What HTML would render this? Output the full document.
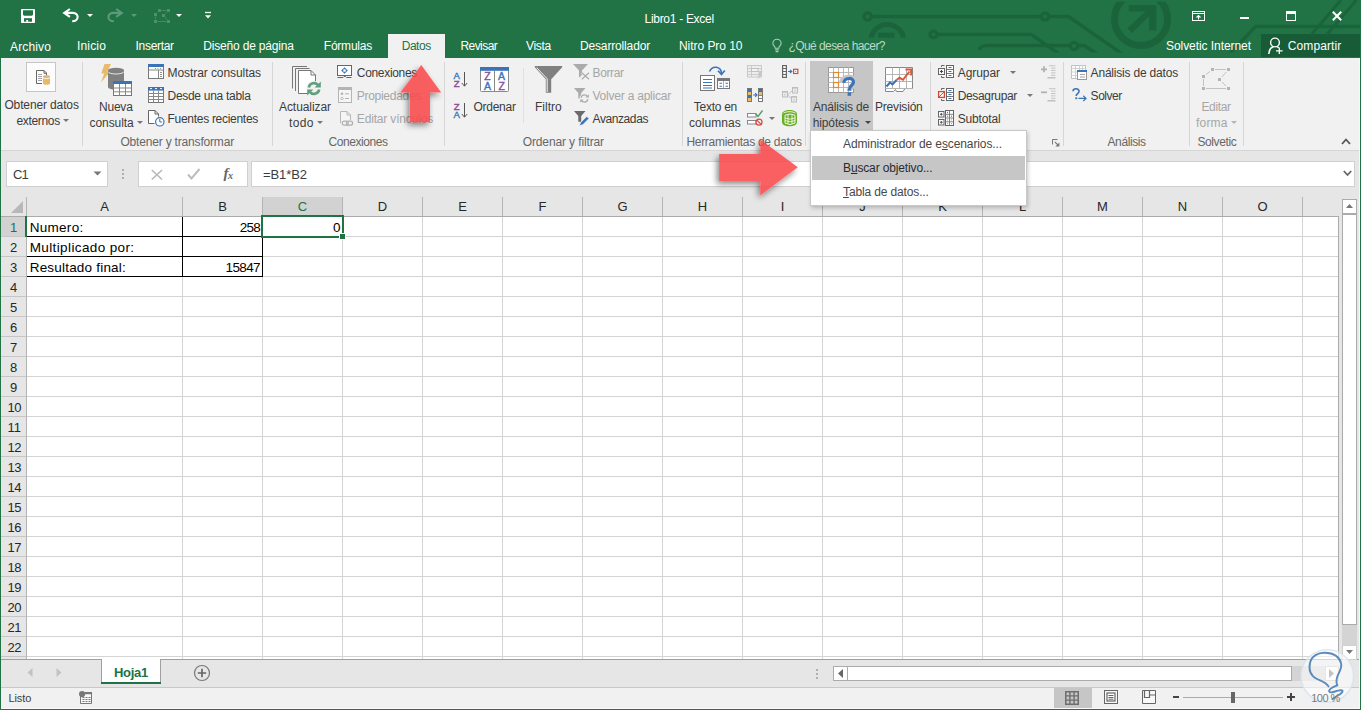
<!DOCTYPE html>
<html lang="es"><head><meta charset="utf-8"><title>Libro1 - Excel</title>
<style>
html,body{margin:0;padding:0;}
body{width:1361px;height:710px;overflow:hidden;background:#fff;font-family:"Liberation Sans",sans-serif;}
#app{position:relative;width:1361px;height:710px;overflow:hidden;background:#e6e6e6;}
.t{position:absolute;line-height:1;white-space:pre;z-index:5;}
.t u{text-decoration:underline;}
.a{position:absolute;}
svg{position:absolute;overflow:visible;}
.sep{position:absolute;width:1px;background:#d6d6d6;top:62px;height:84px;}
.dd{position:absolute;width:0;height:0;border-left:3px solid transparent;border-right:3px solid transparent;border-top:3px solid #777;}

</style></head>
<body>
<div id="app">
<!-- title + tabs -->
<div class="a" style="left:0;top:0;width:1361px;height:58px;background:#217346;"></div>
<div class="a" style="left:388px;top:34px;width:57px;height:24px;background:#f1f1f1;"></div>
<div class="a" style="left:1261px;top:34px;width:100px;height:23px;background:#185c37;"></div>
<!-- ribbon -->
<div class="a" style="left:0;top:58px;width:1361px;height:92px;background:#f1f1f1;"></div>
<div class="a" style="left:0;top:150px;width:1361px;height:1px;background:#d5d5d5;"></div>
<!-- formula bar -->
<div class="a" style="left:6px;top:161px;width:100px;height:24px;background:#fff;border:1px solid #d0d0d0;"></div>
<div class="a" style="left:138px;top:161px;width:108px;height:24px;background:#fff;border:1px solid #d0d0d0;"></div>
<div class="a" style="left:251px;top:161px;width:1102px;height:24px;background:#fff;border:1px solid #d0d0d0;"></div>
<!-- grid -->
<div class="a" style="left:27px;top:217px;width:1311px;height:442px;background-color:#fff;background-image:linear-gradient(to bottom,transparent 19px,#d4d4d4 19px),linear-gradient(to right,transparent 75px,#d4d4d4 75px,#d4d4d4 76px,transparent 76px);background-size:100% 20px,80px 100%;"></div>
<div class="a" style="left:27px;top:217px;width:155px;height:442px;background-color:#fff;background-image:linear-gradient(to bottom,transparent 19px,#d4d4d4 19px);background-size:100% 20px;border-right:1px solid #d4d4d4;"></div>
<!-- grid outer borders -->
<div class="a" style="left:1338px;top:217px;width:1px;height:442px;background:#ababab;"></div>
<div class="a" style="left:1px;top:659px;width:1358px;height:1px;background:#a0a0a0;"></div>
<!-- column header separators -->
<div class="a" style="left:26px;top:197px;width:1312px;height:19px;background-image:linear-gradient(to right,transparent 75px,#b4b4b4 75px,#b4b4b4 76px,transparent 76px);background-size:80px 100%;background-position:1px 0;"></div>
<div class="a" style="left:27px;top:197px;width:155px;height:19px;background:#e6e6e6;"></div>
<div class="a" style="left:26px;top:197px;width:1px;height:462px;background:#b4b4b4;"></div>
<div class="a" style="left:263px;top:197px;width:79px;height:19px;background:#d2d2d2;"></div>
<div class="a" style="left:1px;top:216px;width:1338px;height:1px;background:#ababab;"></div>
<div class="a" style="left:263px;top:215px;width:79px;height:2px;background:#217346;"></div>
<!-- row header lines -->
<div class="a" style="left:1px;top:217px;width:25px;height:442px;background-image:linear-gradient(to bottom,transparent 19px,#c6c6c6 19px);background-size:100% 20px;"></div>
<div class="a" style="left:1px;top:217px;width:25px;height:19px;background:#d2d2d2;"></div>
<div class="a" style="left:25px;top:216px;width:2px;height:21px;background:#217346;"></div>
<svg style="left:11px;top:201px" width="13" height="13" viewBox="0 0 13 13"><path d="M12 0 V12 H0 Z" fill="#b8b8b8"/></svg>
<!-- cell borders A1:B3 -->
<div class="a" style="left:27px;top:236px;width:236px;height:1px;background:#000;"></div>
<div class="a" style="left:27px;top:256px;width:236px;height:1px;background:#000;"></div>
<div class="a" style="left:27px;top:276px;width:236px;height:1px;background:#000;"></div>
<div class="a" style="left:182px;top:217px;width:1px;height:60px;background:#000;"></div>
<div class="a" style="left:262px;top:217px;width:1px;height:60px;background:#000;"></div>
<!-- selection C1 -->
<div class="a" style="left:261px;top:215px;width:79px;height:19px;border:2px solid #217346;"></div>
<div class="a" style="left:339px;top:233px;width:5px;height:5px;background:#217346;border:1px solid #fff;"></div>

<!-- frame -->
<div class="a" style="left:0;top:0;width:1px;height:710px;background:#217346;z-index:50;"></div>
<div class="a" style="left:1360px;top:0;width:1px;height:710px;background:#217346;z-index:50;"></div><div class="a" style="left:1359px;top:58px;width:1px;height:651px;background:#f8f6f8;z-index:49;"></div>
<div class="a" style="left:0;top:709px;width:1361px;height:1px;background:#217346;z-index:50;"></div><div class="a" style="left:1px;top:708px;width:1359px;height:1px;background:#fbf9fb;z-index:49;"></div>
<!-- formula bar widgets -->
<svg style="left:93px;top:171px" width="9" height="5" viewBox="0 0 9 5"><path d="M0.5 0.5 H8.5 L4.5 4.5 Z" fill="#777"/></svg>
<div class="a" style="left:122px;top:169px;width:2px;height:2px;background:#b0b0b0;box-shadow:0 4px 0 #b0b0b0,0 8px 0 #b0b0b0;"></div>
<svg style="left:151px;top:168.5px" width="12" height="12" viewBox="0 0 12 12"><path d="M0.8 1 L11 10.5 M11 1 L0.8 10.5" stroke="#b9b9b9" stroke-width="1.7" fill="none"/></svg>
<svg style="left:187px;top:168px" width="14" height="12" viewBox="0 0 14 12"><path d="M1 6.5 L4.5 10.5 L12.5 1" stroke="#bdbdbd" stroke-width="2" fill="none"/></svg>
<span class="t" style="left:223.5px;top:166px;font-family:'Liberation Serif',serif;font-style:italic;font-weight:bold;font-size:15px;color:#666;letter-spacing:-0.5px;">f<span style="font-size:10px;position:relative;top:1px;">x</span></span>
<svg style="left:1343px;top:170px" width="9" height="7" viewBox="0 0 9 7"><path d="M0.8 1 L4.5 5 L8.2 1" stroke="#666" stroke-width="1.8" fill="none"/></svg>
<!-- vertical scrollbar -->
<div class="a" style="left:1342px;top:199px;width:13px;height:13px;background:#fff;border:1px solid #ababab;"></div>
<svg style="left:1346px;top:204px" width="7" height="4" viewBox="0 0 7 4"><path d="M0 4 H7 L3.5 0 Z" fill="#777"/></svg>
<div class="a" style="left:1342px;top:214px;width:15px;height:431px;background:#d4d4d4;"></div>
<div class="a" style="left:1342px;top:214px;width:13px;height:409px;background:#fff;border:1px solid #ababab;"></div>
<div class="a" style="left:1342px;top:645px;width:13px;height:13px;background:#fff;border:1px solid #d0d0d0;"></div>
<svg style="left:1346px;top:650px" width="7" height="4" viewBox="0 0 7 4"><path d="M0 0 H7 L3.5 4 Z" fill="#777"/></svg>
<!-- sheet tab bar -->
<div class="a" style="left:1px;top:687px;width:1358px;height:1px;background:#c8c8c8;"></div>
<div class="a" style="left:101px;top:660px;width:60px;height:24px;background:#fff;border-bottom:2px solid #217346;box-sizing:border-box;"></div>
<div class="a" style="left:101px;top:659px;width:1px;height:23px;background:#a0a0a0;"></div>
<div class="a" style="left:160px;top:659px;width:1px;height:23px;background:#a0a0a0;"></div><div class="a" style="left:102px;top:659px;width:58px;height:1px;background:#fff;"></div>
<svg style="left:27px;top:668px" width="6" height="9" viewBox="0 0 6 9"><path d="M5.5 0 V9 L0.5 4.5 Z" fill="#c2c2c2"/></svg>
<svg style="left:56px;top:668px" width="6" height="9" viewBox="0 0 6 9"><path d="M0.5 0 V9 L5.5 4.5 Z" fill="#c2c2c2"/></svg>
<svg style="left:193px;top:664px" width="18" height="18" viewBox="0 0 18 18"><circle cx="9" cy="9" r="7.5" fill="none" stroke="#777" stroke-width="1.2"/><path d="M4.8 9 H13.2 M9 4.8 V13.2" stroke="#666" stroke-width="1.7"/></svg>
<!-- horizontal scrollbar -->
<div class="a" style="left:816px;top:669px;width:2px;height:2px;background:#b0b0b0;box-shadow:0 4px 0 #b0b0b0,0 8px 0 #b0b0b0;"></div>
<div class="a" style="left:833px;top:666px;width:505px;height:15px;background:#d4d4d4;"></div>
<div class="a" style="left:833px;top:666px;width:13px;height:13px;background:#fff;border:1px solid #ababab;"></div>
<svg style="left:838px;top:669px" width="5" height="9" viewBox="0 0 5 9"><path d="M5 0 V9 L0 4.5 Z" fill="#666"/></svg>
<div class="a" style="left:847px;top:666px;width:443px;height:13px;background:#fff;border:1px solid #ababab;"></div>
<div class="a" style="left:1325px;top:666px;width:12px;height:13px;background:#fff;border:1px solid #c6c6c6;"></div>
<svg style="left:1329px;top:669px" width="5" height="9" viewBox="0 0 5 9"><path d="M0 0 V9 L5 4.5 Z" fill="#777"/></svg>
<!-- status bar -->
<div class="a" style="left:1px;top:688px;width:1358px;height:20px;background:#f1f1f1;"></div>
<div class="a" style="left:1054px;top:688px;width:38px;height:20px;background:#c6c6c6;"></div>
<svg style="left:79px;top:691px" width="14" height="14" viewBox="0 0 14 14"><path d="M1.5 4 V12.5 H12.5 V1.5 H6" fill="#f8f8f8" stroke="#777" stroke-width="1"/><rect x="6" y="1" width="7" height="2.2" fill="#777"/><circle cx="3.1" cy="3.1" r="3.1" fill="#777"/><path d="M3.5 6.5 H5.5 M6.5 6.5 H8.5 M9.5 6.5 H11.5 M3.5 8.5 H5.5 M6.5 8.5 H8.5 M9.5 8.5 H11.5 M3.5 10.5 H5.5 M6.5 10.5 H8.5 M9.5 10.5 H11.5" stroke="#777" stroke-width="1" fill="none"/></svg>
<svg style="left:1065px;top:691px" width="14" height="14" viewBox="0 0 14 14"><rect x="0.75" y="0.75" width="12.5" height="12.5" fill="none" stroke="#6e6e6e" stroke-width="1.5"/><path d="M4.9 0.5 V13.5 M9.1 0.5 V13.5 M0.5 4.9 H13.5 M0.5 9.1 H13.5" stroke="#6e6e6e" stroke-width="1.4"/></svg>
<svg style="left:1104px;top:690px" width="14" height="14" viewBox="0 0 14 14"><rect x="0.5" y="0.5" width="13" height="13" fill="#f8f8f8" stroke="#666" stroke-width="1"/><rect x="3" y="3" width="8" height="8" fill="#fff" stroke="#666" stroke-width="1.2"/><path d="M4.5 5.5 H9.5 M4.5 7.5 H9.5 M4.5 9.2 H9.5" stroke="#666" stroke-width="1"/></svg>
<svg style="left:1142px;top:690px" width="14" height="14" viewBox="0 0 14 14"><path d="M0.5 0.5 H13.5 V13.5 H0.5 Z" fill="#f8f8f8" stroke="#666" stroke-width="1"/><path d="M2.5 0.5 V7.5 H7.5 V0.5 M7.5 5 H13.5" fill="none" stroke="#666" stroke-width="1.2"/></svg>
<div class="a" style="left:1173px;top:696px;width:6px;height:2px;background:#444;"></div>
<div class="a" style="left:1183px;top:697px;width:100px;height:1px;background:#aaa;"></div>
<div class="a" style="left:1231px;top:692px;width:4px;height:11px;background:#666;"></div>
<div class="a" style="left:1287px;top:696px;width:8px;height:2px;background:#444;"></div>
<div class="a" style="left:1290px;top:693px;width:2px;height:8px;background:#444;"></div>
<!-- ribbon separators -->
<div class="sep" style="left:82px;"></div><div class="sep" style="left:272px;"></div><div class="sep" style="left:444px;"></div>
<div class="sep" style="left:682px;"></div><div class="sep" style="left:805px;"></div><div class="sep" style="left:930px;"></div>
<div class="sep" style="left:1063px;"></div><div class="sep" style="left:1189px;"></div><div class="sep" style="left:1243px;"></div>
<div class="a" style="left:523px;top:68px;width:1px;height:55px;background:#e0e0e0;"></div>
<!-- hipotesis pressed bg -->
<div class="a" style="left:810px;top:61px;width:63px;height:69px;background:#c6c6c6;"></div>
<!-- big-button dropdown arrows -->
<div class="dd" style="left:63px;top:119px;"></div>
<div class="dd" style="left:137px;top:121px;"></div>
<div class="dd" style="left:317px;top:121px;"></div>
<div class="dd" style="left:865px;top:121px;border-top-color:#444;"></div>
<div class="dd" style="left:1231px;top:121px;border-top-color:#b5b5b5;"></div>
<div class="dd" style="left:769px;top:117px;"></div>
<div class="dd" style="left:1010px;top:71px;"></div>
<div class="dd" style="left:1027px;top:94px;"></div>
<!-- dialog launcher + collapse -->
<svg style="left:1052px;top:139px" width="8" height="8" viewBox="0 0 8 8"><path d="M0.5 5.5 V0.5 H5.5" stroke="#777" stroke-width="1" fill="none"/><path d="M2.8 2.8 L6 6" stroke="#777" stroke-width="1.1"/><path d="M7.4 3.4 V7.4 H3.4 Z" fill="#777"/></svg>
<svg style="left:1341px;top:138px" width="10" height="7" viewBox="0 0 10 7"><path d="M1 6 L5 1.5 L9 6" stroke="#555" stroke-width="1.8" fill="none"/></svg>
<!-- dropdown menu -->
<div class="a" style="left:810px;top:130px;width:215px;height:74px;background:#fff;border:1px solid #c8c8c8;box-shadow:1px 2px 4px rgba(0,0,0,0.22);z-index:20;"></div>
<div class="a" style="left:812px;top:156px;width:213px;height:24px;background:#c6c6c6;z-index:21;"></div>
<!-- red arrows -->
<svg style="left:0;top:0;z-index:25;" width="1361" height="710" viewBox="0 0 1361 710">
<defs><filter id="sh" x="-30%" y="-30%" width="160%" height="160%"><feGaussianBlur in="SourceAlpha" stdDeviation="3" result="b"/><feOffset in="b" dx="-2.5" dy="3" result="o"/><feComponentTransfer in="o" result="s"><feFuncA type="linear" slope="0.55"/></feComponentTransfer><feComposite in="s" in2="SourceAlpha" operator="out" result="so"/><feMerge><feMergeNode in="so"/><feMergeNode in="SourceGraphic"/></feMerge></filter></defs>
<path filter="url(#sh)" d="M421.3 65 L441.2 92.5 H430 V122.2 H409.8 V92.5 H400.3 Z" fill="#fa484a" fill-opacity="0.86"/>
<path filter="url(#sh)" d="M797.8 167.3 L760.2 139.6 V153.9 H719.1 V181 H760.2 V195.6 Z" fill="#fa484a" fill-opacity="0.86"/>
</svg>
<!-- title bar decorations (circuit pattern) -->
<svg style="left:0;top:0;z-index:1;" width="1361" height="58" viewBox="0 0 1361 58">
<defs><clipPath id="cp1"><rect x="0" y="0" width="1361" height="52.6"/></clipPath><clipPath id="cp2"><rect x="860" y="0" width="60" height="37.8"/></clipPath></defs>
<g fill="none" stroke="#1b643b" stroke-width="3.4" clip-path="url(#cp1)">
<circle cx="867.7" cy="16.5" r="3.6"/><path d="M871.5 16.5 H1041 M1049 16.5 H1068.5 L1126 56.5"/><circle cx="1045" cy="16.5" r="3.6"/>
<circle cx="933.5" cy="34.5" r="3.4"/><path d="M937 34.5 H1031.5 L1063 56.7"/>
<path d="M979.5 50 Q980 45.5 987 45.5 H1069.5 M1078.5 45.5 H1084 L1101 56.3"/><circle cx="1074" cy="46" r="3.6"/>
<path d="M1221 63.5 L1255.5 26.5 H1361"/>
<path d="M1311 35 L1341 0 M1326.5 35 L1356.5 0" stroke-width="3"/>
</g>
<g clip-path="url(#cp2)"><circle cx="887.3" cy="41" r="16.5" fill="none" stroke="#1b643b" stroke-width="5"/><rect x="878" y="32.7" width="16.5" height="5.2" fill="#1b643b"/></g>
<clipPath id="cp3"><rect x="1100" y="1.8" width="90" height="56"/></clipPath>
<g clip-path="url(#cp3)"><circle cx="1141" cy="19" r="26.5" fill="none" stroke="#1b643b" stroke-width="7"/></g>
<path d="M1128.8 5 H1156.4 V30.6 H1149 V16.3 L1131.9 32.9 L1127.3 28.2 L1145.5 11.4 H1128.8 Z" fill="#1b643b"/>
</svg>
<!-- window controls -->
<svg style="left:1192px;top:11px;z-index:3" width="13" height="10" viewBox="0 0 13 10"><rect x="0.5" y="0.5" width="12" height="9" fill="none" stroke="#fff"/><path d="M0.5 2.5 H12.5" stroke="#fff"/><path d="M6.5 8.5 V4.7 M4.5 6.5 L6.5 4.5 L8.5 6.5" stroke="#fff" fill="none" stroke-width="1.1"/></svg>
<div class="a" style="left:1240px;top:17px;width:9px;height:2px;background:#fff;z-index:3;"></div>
<div class="a" style="left:1286px;top:11px;width:8px;height:6px;border:1px solid #fff;border-top:3px solid #fff;z-index:3;"></div>
<svg style="left:1332px;top:11px;z-index:3" width="10" height="10" viewBox="0 0 10 10"><path d="M0.8 0.8 L9.2 9.2 M9.2 0.8 L0.8 9.2" stroke="#fff" stroke-width="2"/></svg>
<!-- QAT -->
<svg style="left:21px;top:9px;z-index:3" width="14" height="14" viewBox="0 0 14 14"><rect x="0" y="0" width="14" height="14" rx="0.8" fill="#fff"/><path d="M2 1.2 H12 V5.8 L11 6.8 H3 L2 5.8 Z" fill="#217346"/><rect x="3" y="9.2" width="8" height="3.5" fill="#217346"/><rect x="5.2" y="11" width="1.9" height="1.8" fill="#fff"/></svg>
<svg style="left:63px;top:8px;z-index:3" width="16" height="15" viewBox="0 0 16 15"><path d="M6.9 1 L1.2 4.9 L6.9 8.8 M1.8 4.9 H10 C16.2 4.9 16.4 13 9.2 13.3" fill="none" stroke="#fff" stroke-width="2.1"/></svg>
<svg style="left:87px;top:14px;z-index:3" width="6" height="3" viewBox="0 0 6 3"><path d="M0 0 H6 L3 3 Z" fill="#fff"/></svg>
<svg style="left:107px;top:8px;z-index:3" width="16" height="15" viewBox="0 0 16 15"><path d="M9.1 1 L14.8 4.9 L9.1 8.8 M14.2 4.9 H6 C-0.2 4.9 -0.4 13 6.8 13.3" fill="none" stroke="#5b9a7a" stroke-width="2.1"/></svg>
<svg style="left:131px;top:14px;z-index:3" width="6" height="3" viewBox="0 0 6 3"><path d="M0 0 H6 L3 3 Z" fill="#5c9a79"/></svg>
<svg style="left:154px;top:9px;z-index:3" width="16" height="14" viewBox="0 0 16 14"><path d="M5.5 1.5 L1.5 5.5 V12.5 H14.5 L9.5 6.5 L14.5 1.5 Z" fill="none" stroke="#478b65" stroke-width="1"/><g fill="#217346"><rect x="3.5" y="-0.5" width="4" height="4"/><rect x="12.5" y="-0.5" width="4" height="4"/><rect x="-0.5" y="3.5" width="4" height="4"/><rect x="7.5" y="4.5" width="4" height="4"/><rect x="-0.5" y="10.5" width="4" height="4"/><rect x="12.5" y="10.5" width="4" height="4"/></g><g fill="#4d9069"><rect x="4" y="0" width="3" height="3"/><rect x="13" y="0" width="3" height="3"/><rect x="0" y="4" width="3" height="3"/><rect x="8" y="5" width="3" height="3"/><rect x="0" y="11" width="3" height="3"/><rect x="13" y="11" width="3" height="3"/></g></svg>
<svg style="left:176px;top:14px;z-index:3" width="6" height="3" viewBox="0 0 6 3"><path d="M0 0 H6 L3 3 Z" fill="#fff"/></svg>
<svg style="left:205px;top:12px;z-index:3" width="6" height="7" viewBox="0 0 6 7"><path d="M0 0.5 H6" stroke="#fff" stroke-width="1.3"/><path d="M0 3.2 H6 L3 6.5 Z" fill="#fff"/></svg>
<!-- bulb + share -->
<svg style="left:772px;top:38.5px;z-index:3" width="10" height="14" viewBox="0 0 10 14"><path d="M3.2 9.2 C3.2 7.2 0.9 6.6 0.9 4.4 A4.1 4.1 0 0 1 9.1 4.4 C9.1 6.6 6.8 7.2 6.8 9.2 Z" fill="none" stroke="#a9ccb8" stroke-width="1.1"/><path d="M3.2 10.9 H6.8 M3.6 12.6 H6.4" stroke="#a9ccb8" stroke-width="1.2"/></svg>
<svg style="left:1268px;top:37px;z-index:3" width="16" height="18" viewBox="0 0 16 18"><circle cx="7" cy="5.5" r="4.4" fill="none" stroke="#fff" stroke-width="1.4"/><path d="M0.8 17 C1 12.5 3.5 10.3 5.5 9.8 M8.8 9.8 C9.8 10 10.3 10.3 10.8 10.8" fill="none" stroke="#fff" stroke-width="1.4"/><path d="M8 13.8 H14.6 M11.3 10.5 V17" stroke="#fff" stroke-width="1.3"/></svg>
<!-- ICONS: Obtener datos externos -->
<div class="a" style="left:26px;top:62px;width:28px;height:28px;background:#fcfcfc;border:1px solid #c6c6c6;"></div>
<svg style="left:36px;top:70px" width="15" height="16" viewBox="0 0 15 16"><path d="M0.5 0.5 H8 L10.5 3 V6 M6 13.5 H0.5 V0.5" fill="#fff" stroke="#666" stroke-width="1"/><path d="M8 0.5 V3.3 H10.8" fill="none" stroke="#666"/><path d="M2 4.5 H6 M2 6.5 H6 M2 8.5 H6 M2 10.5 H6" stroke="#999" stroke-width="0.9"/><path d="M7 6.8 V13.5 C7 15.3 14 15.3 14 13.5 V6.8 Z" fill="#e5b96c"/><ellipse cx="10.5" cy="6.6" rx="3.5" ry="1.5" fill="#e5b96c"/><path d="M7 7.6 C7.5 9 13.5 9 14 7.6" stroke="#fcfcfc" stroke-width="0.9" fill="none"/></svg>
<!-- Nueva consulta -->
<svg style="left:100px;top:64px" width="33" height="33" viewBox="0 0 33 33"><path d="M4.5 0 H11 L7.5 7.2 H10.5 L1 18.5 L4.2 9.5 H1.2 Z" fill="#e8bb6a"/><path d="M8 6.5 V23 C8 26.5 24 26.5 24 23 V6.5 Z" fill="#808080"/><ellipse cx="16" cy="6.3" rx="8" ry="2.6" fill="#808080"/><path d="M8 7.6 C9 10.8 23 10.8 24 7.6" stroke="#f1f1f1" stroke-width="0.9" fill="none"/><rect x="13.5" y="17.5" width="18" height="14" fill="#fff" stroke="#777" stroke-width="1"/><rect x="13" y="17" width="19" height="3" fill="#3b73b9"/><path d="M19.5 20 V31.5 M25.5 20 V31.5 M13.5 24 H31.5 M13.5 27.8 H31.5" stroke="#888" stroke-width="1"/></svg>
<!-- Mostrar consultas -->
<svg style="left:148px;top:64px" width="16" height="15" viewBox="0 0 16 15"><rect x="0.5" y="0.5" width="15" height="14" fill="#fff" stroke="#777"/><rect x="0" y="0" width="16" height="3" fill="#3b73b9"/><path d="M10.5 6 V14.5 M0.5 6 H15.5" stroke="#888"/><path d="M7 4.5 H8 M9.5 4.5 H10.5 M12 4.5 H13 M12 8.5 H14 M12 10.5 H14 M12 12.5 H14" stroke="#888" stroke-width="0.9"/></svg>
<!-- Desde una tabla -->
<svg style="left:148px;top:87px" width="16" height="16" viewBox="0 0 16 16"><rect x="0.5" y="0.5" width="15" height="15" fill="#fff" stroke="#777"/><rect x="0" y="0" width="16" height="3.6" fill="#3b73b9"/><path d="M2 1.6 H4 M7 1.6 H9 M12 1.6 H14" stroke="#fff" stroke-width="1"/><path d="M5.5 3.6 V15.5 M10.5 3.6 V15.5 M0.5 6.5 H15.5 M0.5 9.5 H15.5 M0.5 12.5 H15.5" stroke="#888"/></svg>
<!-- Fuentes recientes -->
<svg style="left:148px;top:110px" width="17" height="17" viewBox="0 0 17 17"><path d="M6.5 13.5 H0.5 V0.5 H7 L10.5 4 V6.5" fill="#fff" stroke="#666"/><path d="M7 0.5 V4 H10.5" fill="none" stroke="#666"/><circle cx="11.8" cy="11.8" r="4.2" fill="#fff" stroke="#3b73b9" stroke-width="1.2"/><path d="M11.8 9 V12 H14" fill="none" stroke="#666" stroke-width="1"/></svg>
<!-- Actualizar todo -->
<svg style="left:292px;top:65px" width="32" height="32" viewBox="0 0 32 32"><path d="M0.5 23.5 V1.5 H15" fill="none" stroke="#777"/><path d="M3.5 26 V3.5 H17.5" fill="none" stroke="#777"/><path d="M6.5 28.5 V5.5 H19 L23.5 10 V28.5 Z" fill="#fff" stroke="#777"/><path d="M19 5.5 V10 H23.5" fill="none" stroke="#777"/><circle cx="22" cy="23.5" r="7.6" fill="#f1f1f1"/><path d="M16.8 22.5 A5.3 5.3 0 0 1 26.3 20.3" fill="none" stroke="#5fa07e" stroke-width="2.6"/><path d="M27.2 24.5 A5.3 5.3 0 0 1 17.7 26.7" fill="none" stroke="#5fa07e" stroke-width="2.6"/><path d="M28.8 16.5 V22.6 H22.7 Z" fill="#5fa07e"/><path d="M15.2 30.5 V24.4 H21.3 Z" fill="#5fa07e"/></svg>
<!-- Conexiones -->
<svg style="left:337px;top:65px" width="16" height="14" viewBox="0 0 16 14"><rect x="0.5" y="0.5" width="14" height="10" fill="#fff" stroke="#666"/><path d="M0.5 12.5 H6 L7 11.5 H8.5 L9.5 12.5 H14.5" fill="none" stroke="#666"/><path d="M7.5 2.2 L10.8 5.5 L7.5 8.8 L4.2 5.5 Z" fill="#3b73b9"/><rect x="6.3" y="4.3" width="2.4" height="2.4" fill="#fff"/></svg>
<!-- Propiedades (disabled) -->
<svg style="left:338px;top:87px" width="15" height="16" viewBox="0 0 15 16"><rect x="0.5" y="0.5" width="13" height="15" fill="#f6f4f6" stroke="#b4b4b4"/><rect x="0" y="0" width="14" height="3" fill="#b4b4b4"/><circle cx="4" cy="6.8" r="1.3" fill="#b4b4b4"/><circle cx="4" cy="11.5" r="1.2" fill="none" stroke="#b4b4b4" stroke-width="0.8"/><path d="M7 6.8 H11 M7 11.5 H11" stroke="#b4b4b4"/></svg>
<!-- Editar vinculos (disabled) -->
<svg style="left:340px;top:111px" width="14" height="16" viewBox="0 0 14 16"><path d="M0.5 12 V0.5 H7 L10.5 4 V9" fill="#f6f4f6" stroke="#b8b8b8"/><path d="M7 0.5 V4 H10.5" fill="none" stroke="#b8b8b8"/><rect x="2.2" y="10.2" width="6" height="4" rx="2" fill="#f1f1f1" stroke="#b0b0b0" stroke-width="1.2"/><rect x="6.6" y="10.2" width="6" height="4" rx="2" fill="none" stroke="#b0b0b0" stroke-width="1.2"/></svg>
<!-- sort A-Z / Z-A -->
<svg style="left:453px;top:71px" width="16" height="17" viewBox="0 0 16 17"><g font-family="Liberation Sans, sans-serif" font-size="9.6" text-anchor="middle" stroke-width="0.35"><text x="3.8" y="8" fill="#3b73b9" stroke="#3b73b9">A</text><text x="3.8" y="15.8" fill="#8b4a9c" stroke="#8b4a9c">Z</text></g><path d="M11.5 1 V15 M8.8 12 L11.5 15.2 L14.2 12" fill="none" stroke="#555" stroke-width="1"/></svg>
<svg style="left:453px;top:102px" width="16" height="17" viewBox="0 0 16 17"><g font-family="Liberation Sans, sans-serif" font-size="9.6" text-anchor="middle" stroke-width="0.35"><text x="3.8" y="8" fill="#8b4a9c" stroke="#8b4a9c">Z</text><text x="3.8" y="15.8" fill="#3b73b9" stroke="#3b73b9">A</text></g><path d="M11.5 1 V15 M8.8 12 L11.5 15.2 L14.2 12" fill="none" stroke="#555" stroke-width="1"/></svg>
<!-- Ordenar -->
<svg style="left:480px;top:67px" width="29" height="25" viewBox="0 0 29 25"><rect x="0.5" y="0.5" width="28" height="24" rx="1" fill="#fff" stroke="#888"/><rect x="0" y="0" width="29" height="3.8" fill="#3b73b9"/><path d="M14.5 3.8 V24.5" stroke="#888"/><g font-family="Liberation Sans, sans-serif" font-size="10.5" text-anchor="middle" stroke-width="0.4"><text x="7.4" y="12.7" fill="#8b4a9c" stroke="#8b4a9c">Z</text><text x="7.4" y="22.7" fill="#3b73b9" stroke="#3b73b9">A</text><text x="21.6" y="12.7" fill="#3b73b9" stroke="#3b73b9">A</text><text x="21.6" y="22.7" fill="#8b4a9c" stroke="#8b4a9c">Z</text></g></svg>
<!-- Filtro -->
<svg style="left:534px;top:66px" width="29" height="27" viewBox="0 0 29 27"><path d="M0.8 0 H28.2 V1.2 L17.2 13.2 V26.8 H11.8 V13.2 L0.8 1.2 Z" fill="#808080"/><path d="M2.6 1.6 L13.2 12.8 V26" fill="none" stroke="#f1f1f1" stroke-width="1"/></svg>
<!-- Borrar (disabled) -->
<svg style="left:573px;top:64px" width="17" height="16" viewBox="0 0 17 16"><path d="M0 0 H15 L9 6.5 V11 L6 13.8 V6.5 Z" fill="#ababab"/><path d="M8.8 8.8 L16 15.2 M16 8.8 L8.8 15.2" stroke="#f1f1f1" stroke-width="2.6"/><path d="M8.8 8.8 L16 15.2 M16 8.8 L8.8 15.2" stroke="#ababab" stroke-width="1.2"/></svg>
<!-- Volver a aplicar (disabled) -->
<svg style="left:574px;top:88px" width="17" height="16" viewBox="0 0 17 16"><path d="M0 0 H11.5 L7.2 5 V10.5 H4.3 V5 Z" fill="#ababab"/><circle cx="10.5" cy="10.5" r="5" fill="#f1f1f1"/><path d="M7 9.8 A3.6 3.6 0 0 1 13.6 8.6 M14 11.2 A3.6 3.6 0 0 1 7.4 12.4" fill="none" stroke="#ababab" stroke-width="1.3"/><path d="M14.8 6.2 V9.6 H11.4 Z M6.2 14.8 V11.4 H9.6 Z" fill="#ababab"/></svg>
<!-- Avanzadas -->
<svg style="left:574px;top:111px" width="17" height="16" viewBox="0 0 17 16"><path d="M0 0 H11.5 L7.2 5 V10.8 H4.3 V5 Z" fill="#6a6a6a"/><path d="M5.2 14.8 L6.6 11.6 L12.8 5.4 L15 7.6 L8.8 13.8 Z" fill="#3b73b9" stroke="#f1f1f1" stroke-width="0.8"/></svg>
<!-- Texto en columnas -->
<svg style="left:699px;top:65px" width="33" height="27" viewBox="0 0 33 27"><rect x="1.5" y="10.5" width="14" height="15" fill="#fff" stroke="#777"/><path d="M4 14.5 H13 M4 17.5 H13 M4 20.5 H13 M4 23 H13" stroke="#3b73b9" stroke-width="1"/><rect x="18.5" y="13.5" width="12" height="10" fill="#fff" stroke="#777"/><rect x="18" y="13" width="13" height="3" fill="#777"/><path d="M24.5 16 V23.5" stroke="#999" stroke-width="0.8"/><path d="M20.5 18.3 H23 M26.5 18.3 H29 M20.5 21.3 H23 M26.5 21.3 H29" stroke="#3b73b9" stroke-width="1.1"/><path d="M10.5 6.5 C13 0.5 22 0.5 22.5 8.5" fill="none" stroke="#3b73b9" stroke-width="1.6"/><path d="M19 5.8 L22.5 9.6 L25.8 5.6" fill="none" stroke="#3b73b9" stroke-width="1.6"/></svg>
<!-- Flash fill (disabled) -->
<svg style="left:747px;top:65px" width="16" height="15" viewBox="0 0 16 15"><rect x="0.5" y="0.5" width="14" height="11.5" fill="#ededed" stroke="#c9c9c9"/><path d="M0.5 3.5 H14.5 M0.5 6.5 H14.5 M0.5 9.5 H14.5 M4.5 0.5 V12" stroke="#c9c9c9" stroke-width="0.9"/><rect x="4.5" y="3.5" width="6.5" height="3" fill="#f4f4f4" stroke="#bdbdbd" stroke-width="0.9"/><path d="M12.5 6 H15.5 L13.5 9.5 H15 L10.5 14.5 L12 10.5 H10.5 Z" fill="#c6c6c6"/></svg>
<!-- Remove duplicates -->
<svg style="left:747px;top:88px" width="16" height="15" viewBox="0 0 16 15"><rect x="0.5" y="0.5" width="4" height="13" fill="#3b73b9" stroke="#777"/><rect x="1" y="4" width="3" height="3" fill="#e8bb6a"/><rect x="1" y="10" width="3" height="3" fill="#e8bb6a"/><rect x="11.5" y="0.5" width="4" height="13" fill="#fff" stroke="#777"/><rect x="12" y="1" width="3" height="3" fill="#3b73b9"/><rect x="12" y="4" width="3" height="3" fill="#e8bb6a"/><path d="M11.5 7.5 H15.5 M11.5 10.5 H15.5" stroke="#777" stroke-width="0.9"/><path d="M6 7 H9.6 M8.2 5.2 L10 7 L8.2 8.8" fill="none" stroke="#3b73b9" stroke-width="1.1"/></svg>
<!-- Data validation -->
<svg style="left:747px;top:110px" width="17" height="16" viewBox="0 0 17 16"><rect x="0.5" y="3.5" width="8.5" height="3.5" fill="#fff" stroke="#888"/><rect x="0.5" y="10.5" width="8.5" height="3.5" fill="#fff" stroke="#888"/><path d="M8.8 4 L11 6.5 L15.5 0.5" fill="none" stroke="#4a9d6a" stroke-width="1.3"/><circle cx="12" cy="12.2" r="3" fill="#f1f1f1" stroke="#d8483a" stroke-width="1.2"/><path d="M9.9 10.1 L14.1 14.3" stroke="#d8483a" stroke-width="1.2"/></svg>
<!-- Consolidate -->
<svg style="left:782px;top:65px" width="17" height="14" viewBox="0 0 17 14"><rect x="0.6" y="0.6" width="3.8" height="11.8" fill="#fff" stroke="#666" stroke-width="1.2"/><path d="M0.6 3.5 H4.4 M0.6 6.5 H4.4 M0.6 9.5 H4.4" stroke="#666" stroke-width="1"/><path d="M6 6.5 H9.4 M8 4.8 L9.8 6.5 L8 8.2" fill="none" stroke="#3b73b9" stroke-width="1.1"/><rect x="11.6" y="4.3" width="4.2" height="4.2" fill="#fff" stroke="#d8483a" stroke-width="1.2"/><rect x="13.2" y="5.9" width="1" height="1" fill="#d8483a"/></svg>
<!-- Relationships (disabled) -->
<svg style="left:782px;top:87px" width="17" height="17" viewBox="0 0 17 17"><path d="M5.5 8 L10.5 3.5 M5.5 8 L10.5 12.5" stroke="#c2c2c2" stroke-width="1"/><rect x="0.5" y="4.5" width="5" height="5.5" fill="#ececec" stroke="#bdbdbd"/><rect x="10.5" y="0.5" width="5" height="5.5" fill="#ececec" stroke="#bdbdbd"/><rect x="9.5" y="9.5" width="5" height="5.5" fill="#ececec" stroke="#bdbdbd"/><rect x="0" y="4" width="6" height="1.6" fill="#bdbdbd"/><rect x="10" y="0" width="6" height="1.6" fill="#bdbdbd"/><rect x="9" y="9" width="6" height="1.6" fill="#bdbdbd"/><path d="M2 7.8 H4 M12 3.8 H14 M11 12.8 H13" stroke="#bdbdbd" stroke-width="0.8"/></svg>
<!-- Data model -->
<svg style="left:782px;top:110px" width="16" height="17" viewBox="0 0 16 17"><path d="M0 4.5 C0 1.5 3 0 7.5 0 C12 0 15 1.5 15 4.5 V12 C15 14.8 12 16.2 7.5 16.2 C3 16.2 0 14.8 0 12 Z" fill="#6ab023"/><path d="M3 5.2 L8 4 L13 5.2 V13 L8 14.6 L3 13 Z" fill="none" stroke="#fff" stroke-width="0.9"/><path d="M6 4.6 V13.8 M10 4.6 V13.8 M3 8 L8 9.2 L13 8 M3 10.5 L8 11.8 L13 10.5" stroke="#fff" stroke-width="0.8" fill="none"/><path d="M1.5 3.2 C4 1.2 11 1.2 13.5 3.2" stroke="#fff" stroke-width="0.9" fill="none"/></svg>
<!-- Analisis de hipotesis -->
<svg style="left:828px;top:67px" width="30" height="30" viewBox="0 0 30 30"><rect x="0.5" y="0.5" width="25" height="25" fill="#fff" stroke="#999"/><path d="M5.5 0.5 V25.5 M10.5 0.5 V25.5 M15.5 0.5 V25.5 M20.5 0.5 V25.5 M0.5 5.5 H25.5 M0.5 10.5 H25.5 M0.5 15.5 H25.5 M0.5 20.5 H25.5" stroke="#b9b9b9" stroke-width="1"/><rect x="5.5" y="5.5" width="5" height="5" fill="#fff" stroke="#e08a2e" stroke-width="1.2"/><rect x="5.5" y="15.5" width="5" height="5" fill="#fff" stroke="#e08a2e" stroke-width="1.2"/><path d="M13.5 16 C14 8 28.5 8.5 27.2 15.5 C26.5 19.5 21 19.5 21.3 24.2" fill="none" stroke="#c6c6c6" stroke-width="5.2"/><path d="M15.8 15.8 C16.2 10 26.3 10.2 25.4 15.4 C24.8 18.6 21 19 21.3 23.6" fill="none" stroke="#3b73b9" stroke-width="3.2"/><rect x="19.6" y="25.4" width="3.5" height="3.4" fill="#3b73b9"/></svg>
<!-- Prevision -->
<svg style="left:885px;top:67px" width="29" height="26" viewBox="0 0 29 26"><path d="M0.5 0.5 H27.5 V21.5 H20 L18 24.5 H11.5 L10.5 22.5 L8.5 24.5 H0.5 Z" fill="#fff" stroke="#888"/><path d="M7.5 0.5 V21 M14.5 0.5 V21 M21.5 0.5 V21 M0.5 7.5 H27.5 M0.5 14.5 H27.5 M0.5 21.5 H27.5" stroke="#b4b4b4" stroke-width="1"/><path d="M1.5 19.5 L5 15.5 L7.5 17.5 L11.5 13" fill="none" stroke="#3b73b9" stroke-width="2"/><path d="M11.5 13 L14.5 10.8 L18 12.8 L24.5 4.5" fill="none" stroke="#d9583b" stroke-width="2"/><path d="M20.5 2.6 H26.2 V8.6" fill="none" stroke="#d9583b" stroke-width="2"/></svg>
<!-- Agrupar -->
<svg style="left:938px;top:65px" width="16" height="14" viewBox="0 0 16 14"><path d="M6.5 0.5 H3.5 V2 M3.5 11 V12.5 H6.5" fill="none" stroke="#666"/><rect x="0.5" y="3.5" width="6" height="6" fill="#f8f8f8" stroke="#666"/><path d="M2 6.5 H5 M3.5 5 V8" stroke="#444" stroke-width="1"/><rect x="8.5" y="0.5" width="7" height="12" fill="#fff" stroke="#666"/><path d="M8.5 4.5 H15.5 M8.5 8.5 H15.5" stroke="#666" stroke-width="0.9"/><path d="M10.5 2.5 H13.5 M10.5 6.5 H13.5 M10.5 10.5 H13.5" stroke="#3b73b9" stroke-width="1.1"/></svg>
<!-- Desagrupar -->
<svg style="left:938px;top:88px" width="16" height="14" viewBox="0 0 16 14"><path d="M6.5 0.5 H3.5 V2 M3.5 11 V12.5 H6.5" fill="none" stroke="#666"/><rect x="0.6" y="3.6" width="5.8" height="5.8" fill="#fff" stroke="#d8482f" stroke-width="1.3"/><path d="M0.8 9.2 L6.2 3.8" stroke="#d8482f" stroke-width="1"/><rect x="8.5" y="0.5" width="7" height="12" fill="#fff" stroke="#666"/><path d="M8.5 4.5 H15.5 M8.5 8.5 H15.5" stroke="#666" stroke-width="0.9"/><path d="M10.5 2.5 H13.5 M10.5 6.5 H13.5 M10.5 10.5 H13.5" stroke="#3b73b9" stroke-width="1.1"/></svg>
<!-- Subtotal -->
<svg style="left:938px;top:110px" width="16" height="16" viewBox="0 0 16 16"><rect x="0.5" y="1.5" width="5.5" height="5.5" fill="#f8f8f8" stroke="#666"/><rect x="0.5" y="9.5" width="5.5" height="5.5" fill="#f8f8f8" stroke="#666"/><path d="M2 4.3 H4.6 M3.3 3 V5.6 M2 12.3 H4.6 M3.3 11 V13.6" stroke="#444" stroke-width="0.9"/><rect x="7.5" y="0.5" width="8" height="15" fill="#fff" stroke="#666"/><path d="M11.5 0.5 V15.5 M7.5 4.3 H15.5 M7.5 8 H15.5 M7.5 11.8 H15.5" stroke="#777" stroke-width="0.9"/><path d="M9 2.4 H10 M9 6.2 H10 M13 6.2 H14" stroke="#3b73b9" stroke-width="1"/><path d="M9 9.9 H10 M13 9.9 H14 M9 13.7 H10 M13 13.7 H14" stroke="#e08a2e" stroke-width="1"/></svg>
<!-- show/hide detail (disabled) -->
<svg style="left:1041px;top:65px" width="15" height="14" viewBox="0 0 15 14"><path d="M0 4.3 H6 M3 1.3 V7.3" stroke="#b0b0b0" stroke-width="1.7"/><path d="M8 0.7 H14.5 M10 3.1 H14.5 M10 5.5 H14.5 M10 7.9 H14.5 M10 10.3 H14.5" stroke="#c4c4c4" stroke-width="1"/><path d="M6.5 12.8 H14.5" stroke="#b4b4b4" stroke-width="1.2"/></svg>
<svg style="left:1041px;top:88px" width="15" height="14" viewBox="0 0 15 14"><path d="M0 4.3 H6" stroke="#b0b0b0" stroke-width="1.7"/><path d="M8 0.7 H14.5 M10 3.1 H14.5 M10 5.5 H14.5 M10 7.9 H14.5 M10 10.3 H14.5" stroke="#c4c4c4" stroke-width="1"/><path d="M6.5 12.8 H14.5" stroke="#b4b4b4" stroke-width="1.2"/></svg>
<!-- Analisis de datos -->
<svg style="left:1071px;top:65px" width="17" height="16" viewBox="0 0 17 16"><rect x="0.5" y="0.5" width="14" height="13" fill="#fff" stroke="#c2c2c2"/><path d="M4.5 0.5 V13.5 M8.5 0.5 V13.5 M11.5 0.5 V13.5 M0.5 3.5 H14.5 M0.5 7 H14.5 M0.5 10.5 H14.5" stroke="#cdcdcd" stroke-width="0.9"/><rect x="6.5" y="5.5" width="9" height="9" fill="#fff" stroke="#999"/><rect x="6" y="5" width="10" height="2" fill="#3b73b9"/><path d="M9 9.5 H14 M9 12 H14" stroke="#999" stroke-width="0.9"/></svg>
<!-- Solver -->
<svg style="left:1072px;top:88px" width="16" height="13" viewBox="0 0 16 13"><path d="M1 3.2 C1.2 -0.2 7.6 0 7 3.6 C6.6 5.6 4 5.8 4.2 8" fill="none" stroke="#3b73b9" stroke-width="1.6"/><rect x="3.3" y="9.3" width="1.9" height="1.9" fill="#3b73b9"/><path d="M6.5 10.4 H14 M11.3 7.8 L14 10.4 L11.3 13" fill="none" stroke="#3b73b9" stroke-width="1.2"/></svg>
<!-- Editar forma (disabled) -->
<svg style="left:1202px;top:68px" width="29" height="23" viewBox="0 0 29 23"><path d="M10.5 1.5 L1.5 8.5 V20.5 H26.5 L17.5 11.5 L26.5 1.5 Z" fill="none" stroke="#c4c0c4" stroke-width="1"/><g fill="#f1f1f1"><rect x="8" y="-1" width="5" height="5"/><rect x="24" y="-1" width="5" height="5"/><rect x="-1" y="6" width="5" height="5"/><rect x="15" y="9" width="5" height="5"/><rect x="-1" y="18" width="5" height="5"/><rect x="24" y="18" width="5" height="5"/></g><g fill="#b4b4b4"><rect x="9" y="0" width="3" height="3"/><rect x="25" y="0" width="3" height="3"/><rect x="0" y="7" width="3" height="3"/><rect x="16" y="10" width="3" height="3"/><rect x="0" y="19" width="3" height="3"/><rect x="25" y="19" width="3" height="3"/></g></svg>
<!-- watermark -->
<svg style="left:1299px;top:647px;z-index:40" width="58" height="58" viewBox="0 0 58 58"><circle cx="28.3" cy="29" r="26.5" fill="#fff" fill-opacity="0.56"/><circle cx="28.3" cy="29" r="26.3" fill="none" stroke="#d5e0ec" stroke-opacity="0.75" stroke-width="1.6"/><path d="M29.5 39.4 C27 35 22 34 18 32 C12 29 9.5 23 11 16 C12.5 9 19 5.5 26 5.8 C33 6 40 9 42 16 C43.5 21 40 25 38.5 29 C37.5 32 36.5 35 38.4 38.4 C35 39.5 32 41 30.5 43 C29 45.5 32 46 36 44.5 C40 43 44 42.5 43.5 44.5 C43 47 37 49 33.4 52.2" fill="none" stroke="#4a7fb5" stroke-opacity="0.9" stroke-width="1.9" stroke-linecap="round" stroke-linejoin="round"/></svg>

<span class="t" style="left:644.50px;top:13.34px;font-size:12px;color:#fff;letter-spacing:-0.291px;">Libro1 - Excel</span>
<span class="t" style="left:10.00px;top:40.84px;font-size:12px;color:#fff;letter-spacing:0.141px;">Archivo</span>
<span class="t" style="left:77.00px;top:39.84px;font-size:12px;color:#fff;letter-spacing:0.164px;">Inicio</span>
<span class="t" style="left:135.60px;top:39.84px;font-size:12px;color:#fff;letter-spacing:-0.323px;">Insertar</span>
<span class="t" style="left:203.20px;top:39.84px;font-size:12px;color:#fff;letter-spacing:-0.175px;">Diseño de página</span>
<span class="t" style="left:323.80px;top:39.84px;font-size:12px;color:#fff;letter-spacing:-0.227px;">Fórmulas</span>
<span class="t" style="left:401.70px;top:39.84px;font-size:12px;color:#217346;letter-spacing:-0.452px;">Datos</span>
<span class="t" style="left:460.40px;top:39.84px;font-size:12px;color:#fff;letter-spacing:-0.541px;">Revisar</span>
<span class="t" style="left:526.00px;top:39.84px;font-size:12px;color:#fff;letter-spacing:-0.294px;">Vista</span>
<span class="t" style="left:580.00px;top:39.84px;font-size:12px;color:#fff;letter-spacing:-0.156px;">Desarrollador</span>
<span class="t" style="left:679.00px;top:39.84px;font-size:12px;color:#fff;letter-spacing:-0.044px;">Nitro Pro 10</span>
<span class="t" style="left:788.40px;top:39.84px;font-size:12px;color:#bcd8c8;letter-spacing:-0.558px;">¿Qué desea hacer?</span>
<span class="t" style="left:1166.00px;top:39.84px;font-size:12px;color:#fff;letter-spacing:-0.062px;">Solvetic Internet</span>
<span class="t" style="left:1287.70px;top:39.84px;font-size:12px;color:#fff;letter-spacing:0.124px;">Compartir</span>
<span class="t" style="left:4.40px;top:99.34px;font-size:12px;color:#3c3c3c;letter-spacing:-0.128px;">Obtener datos</span>
<span class="t" style="left:16.50px;top:115.34px;font-size:12px;color:#3c3c3c;letter-spacing:-0.341px;">externos</span>
<span class="t" style="left:99.00px;top:101.34px;font-size:12px;color:#3c3c3c;letter-spacing:-0.218px;">Nueva</span>
<span class="t" style="left:89.50px;top:117.34px;font-size:12px;color:#3c3c3c;letter-spacing:-0.063px;">consulta</span>
<span class="t" style="left:167.50px;top:66.84px;font-size:12px;color:#3c3c3c;letter-spacing:-0.071px;">Mostrar consultas</span>
<span class="t" style="left:167.50px;top:89.84px;font-size:12px;color:#3c3c3c;letter-spacing:-0.287px;">Desde una tabla</span>
<span class="t" style="left:167.50px;top:112.84px;font-size:12px;color:#3c3c3c;letter-spacing:-0.288px;">Fuentes recientes</span>
<span class="t" style="left:120.40px;top:135.84px;font-size:12px;color:#666;letter-spacing:-0.180px;">Obtener y transformar</span>
<span class="t" style="left:279.00px;top:101.34px;font-size:12px;color:#3c3c3c;letter-spacing:-0.069px;">Actualizar</span>
<span class="t" style="left:289.00px;top:117.34px;font-size:12px;color:#3c3c3c;letter-spacing:0.360px;">todo</span>
<span class="t" style="left:356.80px;top:66.84px;font-size:12px;color:#3c3c3c;letter-spacing:-0.318px;">Conexiones</span>
<span class="t" style="left:356.80px;top:89.84px;font-size:12px;color:#a6a6a6;letter-spacing:-0.290px;">Propiedades</span>
<span class="t" style="left:356.80px;top:112.84px;font-size:12px;color:#a6a6a6;letter-spacing:-0.167px;">Editar vínculos</span>
<span class="t" style="left:328.50px;top:135.84px;font-size:12px;color:#666;letter-spacing:-0.427px;">Conexiones</span>
<span class="t" style="left:473.40px;top:101.34px;font-size:12px;color:#3c3c3c;letter-spacing:-0.247px;">Ordenar</span>
<span class="t" style="left:535.00px;top:101.34px;font-size:12px;color:#3c3c3c;letter-spacing:-0.012px;">Filtro</span>
<span class="t" style="left:592.50px;top:66.84px;font-size:12px;color:#a6a6a6;letter-spacing:-0.357px;">Borrar</span>
<span class="t" style="left:592.50px;top:89.84px;font-size:12px;color:#a6a6a6;letter-spacing:-0.222px;">Volver a aplicar</span>
<span class="t" style="left:592.50px;top:112.84px;font-size:12px;color:#3c3c3c;letter-spacing:-0.406px;">Avanzadas</span>
<span class="t" style="left:522.70px;top:135.84px;font-size:12px;color:#666;letter-spacing:-0.121px;">Ordenar y filtrar</span>
<span class="t" style="left:693.80px;top:101.34px;font-size:12px;color:#3c3c3c;letter-spacing:-0.272px;">Texto en</span>
<span class="t" style="left:689.00px;top:117.34px;font-size:12px;color:#3c3c3c;letter-spacing:0.043px;">columnas</span>
<span class="t" style="left:686.40px;top:135.84px;font-size:12px;color:#666;letter-spacing:-0.291px;">Herramientas de datos</span>
<span class="t" style="left:813.00px;top:101.34px;font-size:12px;color:#3c3c3c;letter-spacing:-0.185px;">Análisis de</span>
<span class="t" style="left:812.70px;top:117.34px;font-size:12px;color:#3c3c3c;letter-spacing:-0.119px;">hipótesis</span>
<span class="t" style="left:875.00px;top:101.34px;font-size:12px;color:#3c3c3c;letter-spacing:-0.195px;">Previsión</span>
<span class="t" style="left:957.70px;top:66.84px;font-size:12px;color:#3c3c3c;letter-spacing:-0.058px;">Agrupar</span>
<span class="t" style="left:957.70px;top:89.84px;font-size:12px;color:#3c3c3c;letter-spacing:-0.340px;">Desagrupar</span>
<span class="t" style="left:957.70px;top:112.84px;font-size:12px;color:#3c3c3c;letter-spacing:-0.156px;">Subtotal</span>
<span class="t" style="left:1090.60px;top:66.84px;font-size:12px;color:#3c3c3c;letter-spacing:-0.196px;">Análisis de datos</span>
<span class="t" style="left:1090.60px;top:89.84px;font-size:12px;color:#3c3c3c;letter-spacing:-0.469px;">Solver</span>
<span class="t" style="left:1107.50px;top:135.84px;font-size:12px;color:#666;letter-spacing:-0.395px;">Análisis</span>
<span class="t" style="left:1201.40px;top:101.34px;font-size:12px;color:#a6a6a6;letter-spacing:-0.327px;">Editar</span>
<span class="t" style="left:1196.00px;top:117.34px;font-size:12px;color:#a6a6a6;letter-spacing:0.203px;">forma</span>
<span class="t" style="left:1197.40px;top:135.84px;font-size:12px;color:#666;letter-spacing:-0.379px;">Solvetic</span>
<span class="t" style="left:843.00px;top:137.84px;font-size:12px;color:#484848;letter-spacing:-0.103px;z-index:30;">Administrador de e<u>s</u>cenarios...</span>
<span class="t" style="left:843.00px;top:161.84px;font-size:12px;color:#2b2b2b;letter-spacing:-0.143px;z-index:30;">B<u>u</u>scar objetivo...</span>
<span class="t" style="left:843.00px;top:185.54px;font-size:12px;color:#484848;letter-spacing:-0.139px;z-index:30;"><u>T</u>abla de datos...</span>
<span class="t" style="left:13.00px;top:168.00px;font-size:13px;color:#3c3c3c;letter-spacing:-0.812px;">C1</span>
<span class="t" style="left:263.00px;top:168.00px;font-size:13px;color:#3c3c3c;letter-spacing:-0.076px;">=B1*B2</span>
<span class="t" style="left:8.40px;top:693.09px;font-size:11px;color:#3c3c3c;letter-spacing:-0.070px;">Listo</span>
<span class="t" style="left:1311.20px;top:693.09px;font-size:11px;color:#7a7a7a;letter-spacing:-0.521px;z-index:45;">100 %</span>
<span class="t" style="left:114.00px;top:665.70px;font-size:13px;color:#217346;font-weight:bold;letter-spacing:-0.281px;">Hoja1</span>
<span class="t" style="left:29.70px;top:220.57px;font-size:13.5px;color:#000;letter-spacing:0.291px;">Numero:</span>
<span class="t" style="left:29.70px;top:240.57px;font-size:13.5px;color:#000;letter-spacing:0.383px;">Multiplicado por:</span>
<span class="t" style="left:29.70px;top:260.57px;font-size:13.5px;color:#000;letter-spacing:0.202px;">Resultado final:</span>
<span class="t" style="left:239.70px;top:220.57px;font-size:13.5px;color:#000;letter-spacing:-0.744px;">258</span>
<span class="t" style="left:225.60px;top:260.57px;font-size:13.5px;color:#000;letter-spacing:-0.629px;">15847</span>
<span class="t" style="left:333.00px;top:220.57px;font-size:13.5px;color:#000;letter-spacing:-0.516px;">0</span>
<span class="t" style="left:104.50px;top:200.00px;font-size:13px;color:#262626;transform:translateX(-50%);">A</span>
<span class="t" style="left:222.50px;top:200.00px;font-size:13px;color:#262626;transform:translateX(-50%);">B</span>
<span class="t" style="left:302.50px;top:200.00px;font-size:13px;color:#217346;transform:translateX(-50%);">C</span>
<span class="t" style="left:382.50px;top:200.00px;font-size:13px;color:#262626;transform:translateX(-50%);">D</span>
<span class="t" style="left:462.50px;top:200.00px;font-size:13px;color:#262626;transform:translateX(-50%);">E</span>
<span class="t" style="left:542.50px;top:200.00px;font-size:13px;color:#262626;transform:translateX(-50%);">F</span>
<span class="t" style="left:622.50px;top:200.00px;font-size:13px;color:#262626;transform:translateX(-50%);">G</span>
<span class="t" style="left:702.50px;top:200.00px;font-size:13px;color:#262626;transform:translateX(-50%);">H</span>
<span class="t" style="left:782.50px;top:200.00px;font-size:13px;color:#262626;transform:translateX(-50%);">I</span>
<span class="t" style="left:862.50px;top:200.00px;font-size:13px;color:#262626;transform:translateX(-50%);">J</span>
<span class="t" style="left:942.50px;top:200.00px;font-size:13px;color:#262626;transform:translateX(-50%);">K</span>
<span class="t" style="left:1022.50px;top:200.00px;font-size:13px;color:#262626;transform:translateX(-50%);">L</span>
<span class="t" style="left:1102.50px;top:200.00px;font-size:13px;color:#262626;transform:translateX(-50%);">M</span>
<span class="t" style="left:1182.50px;top:200.00px;font-size:13px;color:#262626;transform:translateX(-50%);">N</span>
<span class="t" style="left:1262.50px;top:200.00px;font-size:13px;color:#262626;transform:translateX(-50%);">O</span>
<span class="t" style="left:13.50px;top:221.00px;font-size:13px;color:#217346;transform:translateX(-50%);">1</span>
<span class="t" style="left:13.50px;top:241.00px;font-size:13px;color:#262626;transform:translateX(-50%);">2</span>
<span class="t" style="left:13.50px;top:261.00px;font-size:13px;color:#262626;transform:translateX(-50%);">3</span>
<span class="t" style="left:13.50px;top:281.00px;font-size:13px;color:#262626;transform:translateX(-50%);">4</span>
<span class="t" style="left:13.50px;top:301.00px;font-size:13px;color:#262626;transform:translateX(-50%);">5</span>
<span class="t" style="left:13.50px;top:321.00px;font-size:13px;color:#262626;transform:translateX(-50%);">6</span>
<span class="t" style="left:13.50px;top:341.00px;font-size:13px;color:#262626;transform:translateX(-50%);">7</span>
<span class="t" style="left:13.50px;top:361.00px;font-size:13px;color:#262626;transform:translateX(-50%);">8</span>
<span class="t" style="left:13.50px;top:381.00px;font-size:13px;color:#262626;transform:translateX(-50%);">9</span>
<span class="t" style="left:7.40px;top:401.00px;font-size:13px;color:#262626;letter-spacing:-0.284px;">10</span>
<span class="t" style="left:7.40px;top:421.00px;font-size:13px;color:#262626;letter-spacing:0.200px;">11</span>
<span class="t" style="left:7.40px;top:441.00px;font-size:13px;color:#262626;letter-spacing:-0.284px;">12</span>
<span class="t" style="left:7.40px;top:461.00px;font-size:13px;color:#262626;letter-spacing:-0.284px;">13</span>
<span class="t" style="left:7.40px;top:481.00px;font-size:13px;color:#262626;letter-spacing:-0.284px;">14</span>
<span class="t" style="left:7.40px;top:501.00px;font-size:13px;color:#262626;letter-spacing:-0.284px;">15</span>
<span class="t" style="left:7.40px;top:521.00px;font-size:13px;color:#262626;letter-spacing:-0.284px;">16</span>
<span class="t" style="left:7.40px;top:541.00px;font-size:13px;color:#262626;letter-spacing:-0.284px;">17</span>
<span class="t" style="left:7.40px;top:561.00px;font-size:13px;color:#262626;letter-spacing:-0.284px;">18</span>
<span class="t" style="left:7.40px;top:581.00px;font-size:13px;color:#262626;letter-spacing:-0.284px;">19</span>
<span class="t" style="left:7.40px;top:601.00px;font-size:13px;color:#262626;letter-spacing:-0.284px;">20</span>
<span class="t" style="left:7.40px;top:621.00px;font-size:13px;color:#262626;letter-spacing:-0.284px;">21</span>
<span class="t" style="left:7.40px;top:641.00px;font-size:13px;color:#262626;letter-spacing:-0.284px;">22</span>
</div>
</body></html>
